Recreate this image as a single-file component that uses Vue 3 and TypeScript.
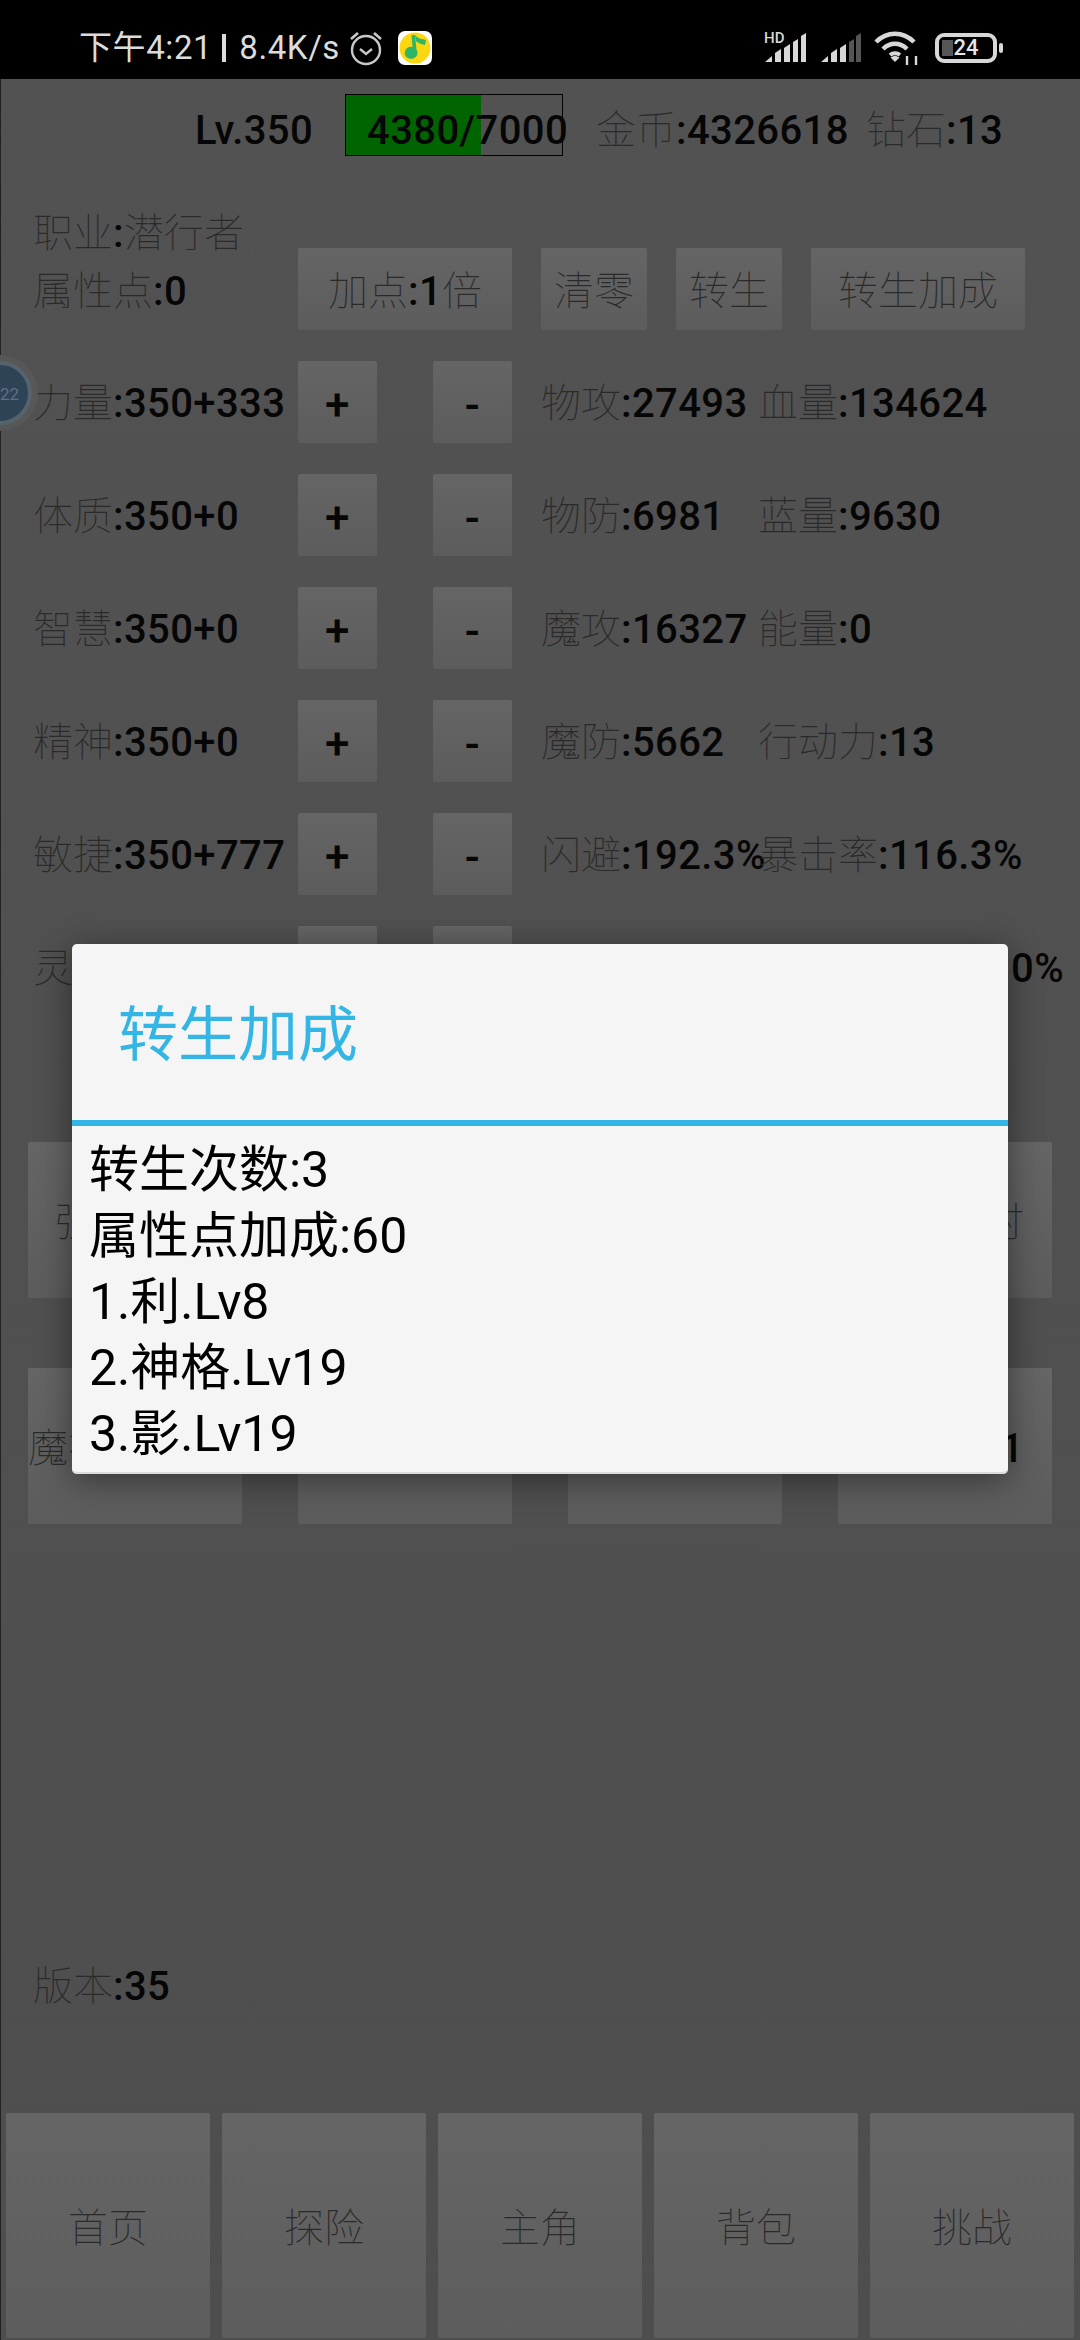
<template>
  <div class="screen">
    <div class="status-bar">
      <div class="status-left">
        <span class="status-text">下午4:21</span>
        <span class="status-sep"></span>
        <span class="status-text">8.4K/s</span>
        <svg class="alarm" width="34" height="36" viewBox="0 0 34 36" fill="none" stroke="#c8c8c8">
          <circle cx="17" cy="20" r="14" stroke-width="2.4" />
          <path d="M11 19l6 5 6-5" stroke-width="2.4" />
          <path d="M2 9l7-6M32 9l-7-6" stroke-width="2.6" />
        </svg>
        <svg class="qq" width="34" height="34" viewBox="0 0 34 34">
          <rect width="34" height="34" rx="7" fill="#fff" />
          <circle cx="17" cy="17" r="15.5" fill="#fcd60f" />
          <path d="M17 4l1.500 14.500a6.500 6 0 1 1-4-2.500l-1-12z" fill="#2fb568" />
          <path d="M17 4c3 4 7 4 11 5l-1 5c-4-1-7-2-9-4z" fill="#2fb568" />
        </svg>
      </div>
      <div class="status-right">
        <svg width="44" height="40" viewBox="0 -4 44 40">
          <text x="0" y="11" class="hd">HD</text>
          <path d="M1 30l7-6v6zM11 30v-9l6-4v13zM20 30V16l6-4v18zM29 30V10l5-3v23zM37 30V4l5-3v29z" fill="#d8d8d8" />
        </svg>
        <svg width="42" height="30" viewBox="0 0 42 30">
          <path d="M1 29l7-6v6zM11 29v-9l6-4v13z" fill="#d8d8d8" />
          <path d="M20 29V15l6-4v18z" fill="#d8d8d8" />
          <path d="M29 29V9l5-3v23zM36 29V3l5-3v29z" fill="#555" />
        </svg>
        <svg width="46" height="34" viewBox="0 0 46 34" fill="none" stroke="#d8d8d8" stroke-width="4.500">
          <path d="M2 11c11-11 27-11 38 0" />
          <path d="M9 18c7-7 17-7 24 0" />
          <path d="M16 24c3-2.500 7-2.500 10 0" stroke-width="4" />
          <path d="M21 31l-4.500-4.500 4.500-2 4.500 2z" fill="#d8d8d8" stroke="none" />
          <path d="M33 34v-9M42 34v-9" stroke-width="2.400" />
        </svg>
        <div class="battery">
          <div class="battery-body">
            <span class="battery-level"></span>
            <span class="battery-num">24</span>
          </div>
          <span class="battery-tip"></span>
        </div>
      </div>
    </div>

    <div class="game">
      <div class="header">
        <span class="lv num">Lv.350</span>
        <div class="exp">
          <div class="exp-fill" :style="{ width: `${expPercent}%` }"></div>
          <span class="exp-text num">4380/7000</span>
        </div>
        <span class="coin"><span class="cn">金币</span><span class="num">:4326618</span></span>
        <span class="diamond"><span class="cn">钻石</span><span class="num">:13</span></span>
      </div>

      <div class="role-row">
        <div class="role-info">
          <div><span class="cn">职业</span><span class="num">:</span><span class="cn">潜行者</span></div>
          <div><span class="cn">属性点</span><span class="num">:0</span></div>
        </div>
        <button class="btn w214"><span class="cn">加点</span><span class="num">:1</span><span class="cn">倍</span></button>
        <button class="btn w106 ml29"><span class="cn">清零</span></button>
        <button class="btn w106 ml29"><span class="cn">转生</span></button>
        <button class="btn w214 ml29"><span class="cn">转生加成</span></button>
      </div>

      <div v-for="row in attrs" :key="row.name" class="attr-row">
        <div class="attr-name"><span class="cn">{{ row.name }}</span><span class="num">{{ row.value }}</span></div>
        <button class="btn small num">+</button>
        <button class="btn small num minus">-</button>
        <div class="stat"><span class="cn">{{ row.s1 }}</span><span class="num">{{ row.v1 }}</span></div>
        <div class="stat2"><span class="cn">{{ row.s2 }}</span><span class="num">{{ row.v2 }}</span></div>
      </div>

      <div class="attr-row">
        <div class="attr-name"><span class="cn">灵</span></div>
        <button class="btn small"></button>
        <button class="btn small minus"></button>
        <div class="last-value num">0%</div>
      </div>

      <div class="big-grid">
        <button class="btn big start pl27"><span class="cn">强</span></button>
        <button class="btn big"></button>
        <button class="btn big"></button>
        <button class="btn big end"><span class="cn">时</span></button>
        <button class="btn big start"><span class="cn">魔神</span></button>
        <button class="btn big"></button>
        <button class="btn big"></button>
        <button class="btn big end"><span class="num">1</span></button>
      </div>

      <div class="version"><span class="cn">版本</span><span class="num">:35</span></div>

      <div class="nav">
        <button v-for="item in navItems" :key="item" class="nav-btn"><span class="cn">{{ item }}</span></button>
      </div>
    </div>

    <div class="float-ball"><span>22</span></div>

    <div class="dialog">
      <div class="dialog-title">转生加成</div>
      <div class="dialog-body">
        <div v-for="line in dialogLines" :key="line">{{ line }}</div>
      </div>
    </div>
  </div>
</template>

<script setup lang="ts">
import { computed } from 'vue'

const expPercent = computed(() => (4380 / 7000) * 100)

const attrs = [
  { name: '力量', value: ':350+333', s1: '物攻', v1: ':27493', s2: '血量', v2: ':134624' },
  { name: '体质', value: ':350+0', s1: '物防', v1: ':6981', s2: '蓝量', v2: ':9630' },
  { name: '智慧', value: ':350+0', s1: '魔攻', v1: ':16327', s2: '能量', v2: ':0' },
  { name: '精神', value: ':350+0', s1: '魔防', v1: ':5662', s2: '行动力', v2: ':13' },
  { name: '敏捷', value: ':350+777', s1: '闪避', v1: ':192.3%', s2: '暴击率', v2: ':116.3%' },
]

const navItems = ['首页', '探险', '主角', '背包', '挑战']

const dialogLines = ['转生次数:3', '属性点加成:60', '1.利.Lv8', '2.神格.Lv19', '3.影.Lv19']
</script>

<style>
html,
body {
  margin: 0;
  background: #000;
}
</style>

<style scoped>
.screen {
  position: relative;
  width: 1080px;
  height: 2340px;
  overflow: hidden;
  font-family: Roboto, "Noto Sans CJK SC", sans-serif;
  font-size: 40px;
  color: #000;
  background: #000;
}

.status-bar {
  height: 79px;
  display: flex;
  justify-content: space-between;
  align-items: center;
  padding: 17px 77px 0 79px;
  box-sizing: border-box;
  color: #dcdcdc;
}

.status-left,
.status-right {
  display: flex;
  align-items: center;
}

.status-text {
  font-size: 33px;
  line-height: 40px;
  letter-spacing: 0.6px;
}

.status-sep {
  width: 4px;
  height: 28px;
  margin: 0 13px 0 10px;
  background: #dcdcdc;
}

.alarm {
  margin-left: 9px;
}

.qq {
  margin-left: 15px;
}

.status-right {
  gap: 12px;
}

.hd {
  font-family: Roboto, sans-serif;
  font-size: 15px;
  font-weight: 500;
  fill: #d8d8d8;
}

.battery {
  display: flex;
  align-items: center;
  gap: 2px;
  margin-left: 3px;
}

.battery-body {
  position: relative;
  width: 62px;
  height: 30px;
  border: 4px solid #d8d8d8;
  border-radius: 9px;
  box-sizing: border-box;
  display: flex;
  align-items: center;
  justify-content: center;
}

.battery-level {
  position: absolute;
  left: 3px;
  top: 3px;
  bottom: 3px;
  width: 11px;
  background: #555;
}

.battery-num {
  position: relative;
  font-size: 22px;
  line-height: 22px;
  font-weight: 500;
  color: #e6e6e6;
}

.battery-tip {
  width: 4px;
  height: 10px;
  border-radius: 2px;
  background: #d8d8d8;
}

.game {
  height: 2261px;
  display: flex;
  flex-direction: column;
  box-sizing: border-box;
  border-left: 1px solid #222;
  background: linear-gradient(#525252, #4e4e4e);
}

.cn {
  font-weight: 100;
  color: #2a2a2a;
}

.num {
  font-weight: 500;
  color: #060606;
  letter-spacing: 0.4px;
}

.header {
  height: 62px;
  margin-top: 15px;
  padding-left: 194px;
  display: flex;
  align-items: center;
  white-space: nowrap;
  line-height: 50px;
}

.lv {
  width: 150px;
  padding-top: 12px;
}

.exp {
  position: relative;
  width: 218px;
  height: 62px;
  border: 1px solid #000;
  box-sizing: border-box;
  line-height: 50px;
}

.exp-fill {
  position: absolute;
  left: 0;
  top: 0;
  bottom: 0;
  background: #006400;
}

.exp-text {
  position: relative;
  display: block;
  padding: 11px 0 0 21px;
}

.coin {
  margin-left: 33px;
  padding-top: 12px;
  width: 270px;
}

.diamond {
  padding-top: 12px;
}

.role-row {
  height: 127px;
  margin-top: 47px;
  display: flex;
  align-items: flex-end;
  padding-left: 297px;
  position: relative;
}

.role-info {
  position: absolute;
  left: 32px;
  top: 2px;
  line-height: 58px;
}

.btn {
  padding: 5px 0 0;
  border: 0;
  border-radius: 2px;
  background: linear-gradient(#656565, #5c5c5c);
  font-family: inherit;
  font-size: 40px;
  line-height: 48px;
  color: #060606;
  height: 82px;
  display: flex;
  align-items: center;
  justify-content: center;
  white-space: nowrap;
  box-sizing: border-box;
}

.w214 {
  width: 214px;
}

.w106 {
  width: 106px;
}

.ml29 {
  margin-left: 29px;
}

.attr-row {
  height: 82px;
  margin-top: 31px;
  display: flex;
  align-items: center;
  position: relative;
  white-space: nowrap;
}

.attr-name {
  width: 297px;
  flex-shrink: 0;
  padding: 4px 0 0 32px;
  box-sizing: border-box;
  line-height: 50px;
}

.small {
  width: 79px;
  flex-shrink: 0;
  font-size: 44px;
}

.minus {
  margin-left: 56px;
}

.stat {
  width: 217px;
  flex-shrink: 0;
  margin-left: 29px;
  padding-top: 4px;
  line-height: 50px;
}

.stat2 {
  padding-top: 4px;
  line-height: 50px;
}

.last-value {
  margin-left: auto;
  margin-right: 16px;
  padding-top: 4px;
  line-height: 50px;
}

.big-grid {
  display: grid;
  grid-template-columns: repeat(4, 214px);
  grid-auto-rows: 156px;
  column-gap: 56px;
  row-gap: 70px;
  padding-left: 27px;
  margin-top: 134px;
}

.big {
  width: 214px;
  height: 156px;
}

.start {
  justify-content: flex-start;
}

.pl27 {
  padding-left: 27px;
}

.end {
  justify-content: flex-end;
  padding-right: 28px;
}

.version {
  margin-top: 438px;
  padding-left: 32px;
  line-height: 50px;
}

.nav {
  margin-top: auto;
  padding: 0 5px 2px;
  display: flex;
  gap: 12px;
}

.nav-btn {
  width: 204px;
  height: 225px;
  padding: 7px 0 0;
  border: 0;
  border-radius: 2px;
  background: linear-gradient(#656565, #5d5d5d);
  font-family: inherit;
  font-size: 40px;
  line-height: 48px;
}

.float-ball {
  position: absolute;
  left: -38px;
  top: 355px;
  width: 76px;
  height: 76px;
  border-radius: 50%;
  background: #575757;
  display: flex;
  align-items: center;
  justify-content: center;
}

.float-ball span {
  width: 56px;
  height: 56px;
  border: 4px solid #56626c;
  border-radius: 50%;
  background: #2f4357;
  color: #5f6f80;
  font-size: 17px;
  line-height: 58px;
  text-indent: 28px;
}

.dialog {
  position: absolute;
  left: 72px;
  top: 944px;
  width: 936px;
  height: 530px;
  border-radius: 5px;
  background: #f5f5f5;
  box-shadow: inset 0 -2px 0 #dcdcdc, 0 6px 34px rgba(0, 0, 0, 0.45);
  color: #000;
}

.dialog-title {
  height: 176px;
  padding-left: 46px;
  border-bottom: 6px solid #33b5e5;
  font-size: 60px;
  line-height: 184px;
  color: #33b5e5;
}

.dialog-body {
  padding: 11px 17px 0;
  font-size: 50px;
  line-height: 66px;
  white-space: nowrap;
}
</style>
